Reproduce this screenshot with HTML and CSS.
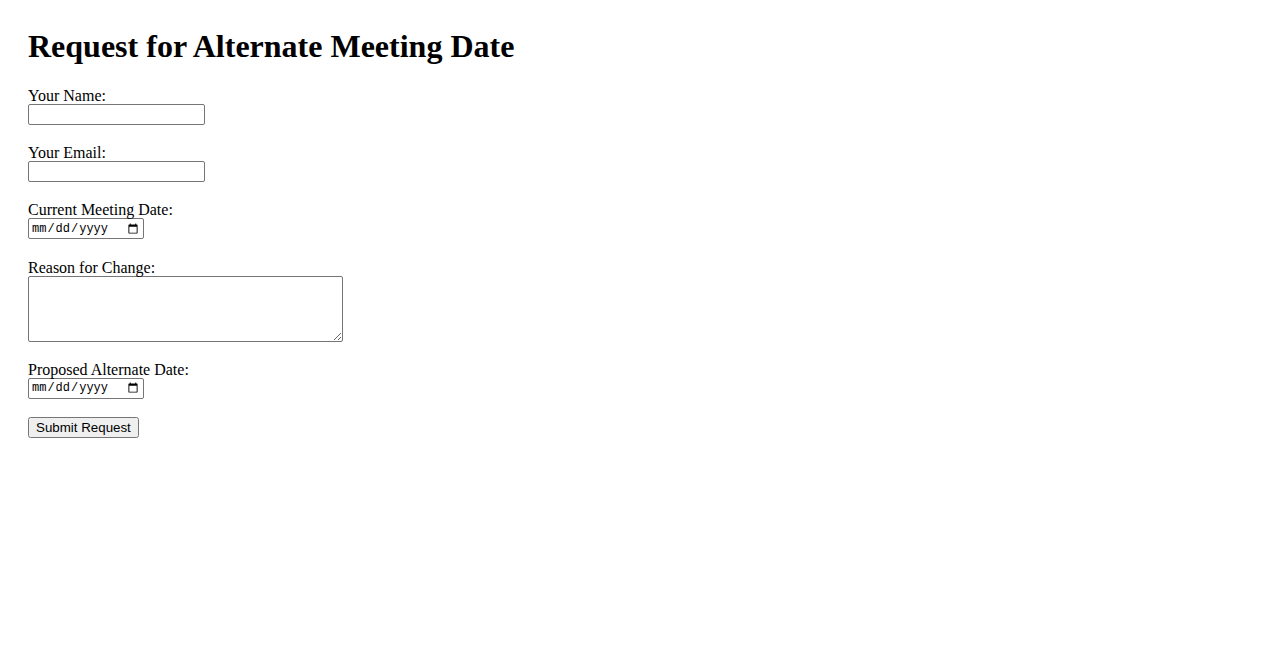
FILE: index.html
```html
<!DOCTYPE html>
<html lang="en">
<head>
  <meta charset="UTF-8" />
  <meta name="viewport" content="width=device-width, initial-scale=1.0"/>
  <title>Request for Alternate Meeting Date</title>
  <link rel="stylesheet" href="styles.css">
</head>
<body>
  <h1 class="title">Request for Alternate Meeting Date</h1>

  <form class="request-form">
    <div class="field">
      <label for="name">Your Name:</label>
      <input type="text" id="name" name="name" />
    </div>

    <div class="field">
      <label for="email">Your Email:</label>
      <input type="email" id="email" name="email" />
    </div>

    <div class="field">
      <label for="currentDate">Current Meeting Date:</label>
      <input type="date" id="currentDate" name="currentDate" />
    </div>

    <div class="field">
      <label for="reason">Reason for Change:</label>
      <textarea id="reason" name="reason" rows="4" cols="40"></textarea>
    </div>

    <div class="field">
      <label for="altDate">Proposed Alternate Date:</label>
      <input type="date" id="altDate" name="altDate" />
    </div>

    <button type="submit">Submit Request</button>
  </form>
</body>
</html>
```

FILE: styles.css
```css
body {
  margin: 0;
  padding: 28px;
  font-family: 'Liberation Serif', 'Times New Roman', serif;
  font-size: 16px;
  color: #000;
  background: #fff;
}

.title {
  font-size: 2em;
  margin: 0 0 21px;
}

.field {
  margin-bottom: 18.2px;
}

.field label {
  display: block;
  padding-top: 1px;
  margin-bottom: -1px;
}

.field input,
.field textarea {
  display: block;
  margin: 0;
  box-sizing: border-box;
  border: 1px solid #767676;
  border-radius: 2px;
}

.field input[type="text"],
.field input[type="email"] {
  width: 177px;
  height: 21px;
}

.field input[type="date"] {
  width: 116px;
  height: 21px;
  padding: 1px 2px;
  font-family: 'Liberation Mono', monospace;
  font-size: 12px;
}

.field textarea {
  width: 315px;
  height: 66px;
  font-family: 'Liberation Mono', monospace;
  font-size: 13px;
}

button {
  font-family: 'Liberation Sans', Arial, sans-serif;
  font-size: 13.33px;
  margin: 0;
}
```
